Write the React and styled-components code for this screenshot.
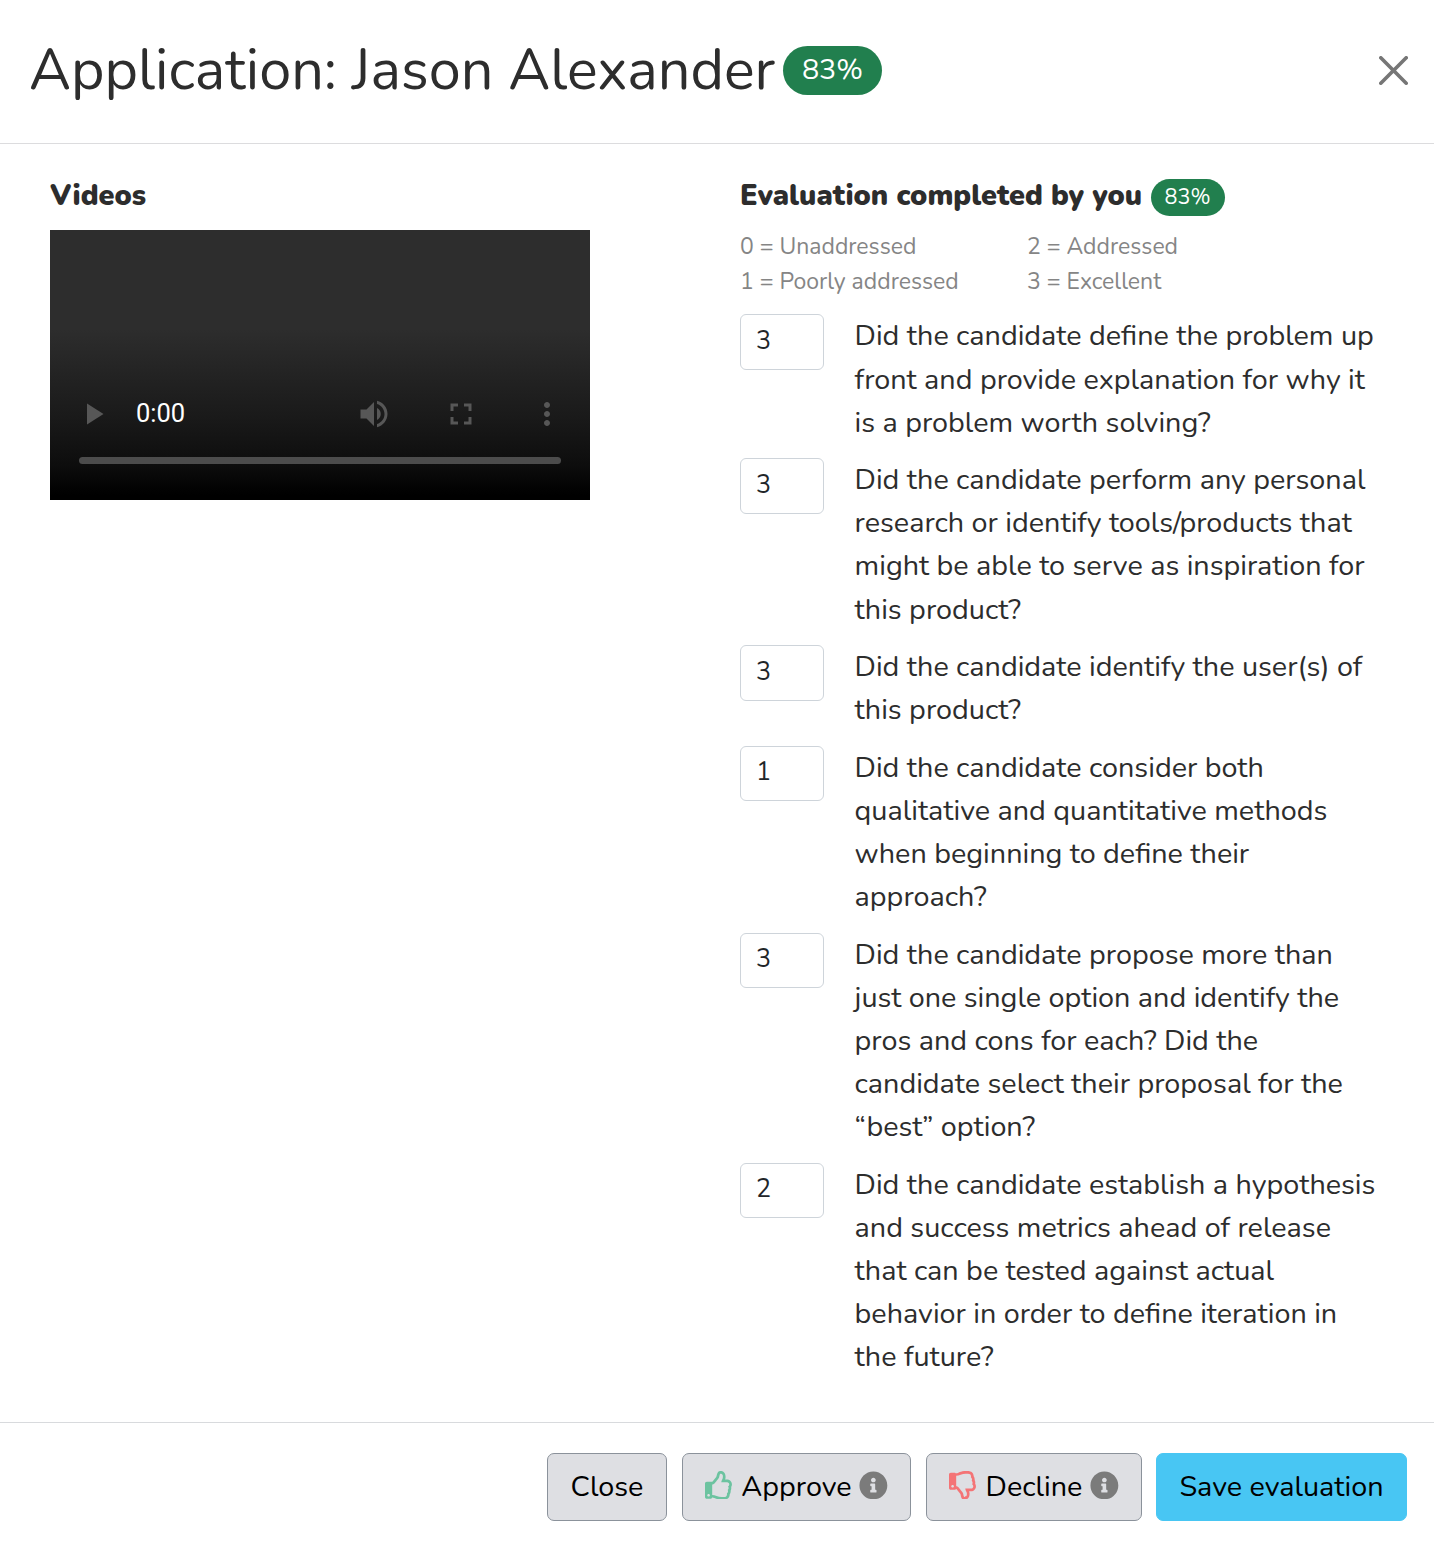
import React from "react";
import styled, { createGlobalStyle } from "styled-components";
import { FaRegThumbsUp, FaRegThumbsDown, FaInfoCircle } from "react-icons/fa";
import { MdPlayArrow, MdVolumeUp, MdFullscreen, MdMoreVert } from "react-icons/md";

const GlobalStyle = createGlobalStyle`
  *, *::before, *::after { box-sizing: border-box; }
  body {
    margin: 0;
    background: #fff;
    color: #2d2d2d;
    font-family: Nunito, Lato, "Open Sans", sans-serif;
    font-size: 28.77px;
    line-height: 43.125px;
  }
`;

const Modal = styled.div`
  display: flex;
  flex-direction: column;
  width: 1434px;
  height: 1548px;
  background: #fff;
`;

const Header = styled.header`
  display: flex;
  align-items: center;
  justify-content: space-between;
  height: 144px;
  padding: 0 26px 2px 29px;
  border-bottom: 1px solid #dcdcde;
`;

const TitleGroup = styled.div`
  display: flex;
  align-items: center;
`;

const Title = styled.h1`
  width: 754px;
  margin: -2px 0 0;
  font-size: 57.55px;
  font-weight: 400;
  line-height: 76px;
  white-space: nowrap;
`;

const Badge = styled.span`
  display: flex;
  align-items: center;
  justify-content: center;
  width: ${(p) => (p.$large ? 99 : 74)}px;
  height: ${(p) => (p.$large ? 49 : 37)}px;
  padding: ${(p) => (p.$large ? "0 0 1px" : "1px 1px 0 0")};
  border-radius: 25px;
  background: #217f4e;
  color: #fff;
  font-size: ${(p) => (p.$large ? 28.75 : 21.56)}px;
  line-height: 1;
`;

const CloseButton = styled.button`
  display: flex;
  padding: 0;
  border: 0;
  background: none;
  color: #767676;
`;

const Body = styled.main`
  display: grid;
  grid-template-columns: 540px 640px;
  column-gap: 150px;
  align-items: start;
  height: 1278px;
  padding: 28px 50px 0;
`;

const Section = styled.section`
  display: flex;
  flex-direction: column;
`;

const SectionHead = styled.div`
  display: flex;
  align-items: center;
  gap: 9px;
  height: 50px;
`;

const SectionTitle = styled.h2`
  margin: -3px 0 0;
  font-size: 28.75px;
  font-weight: 900;
  white-space: nowrap;
`;

const Player = styled.div`
  display: flex;
  flex-direction: column;
  justify-content: flex-end;
  width: 540px;
  height: 270px;
  margin-top: 8px;
  padding: 0 29px 36px;
  background: linear-gradient(#2d2d2d 0, #2d2d2d 100px, #1a1a1a 186px, #0d0d0d 235px, #000 265px);
`;

const Controls = styled.div`
  display: grid;
  grid-template-columns: 61px 1fr 87px 87px 86px;
  align-items: center;
  height: 36px;
  margin: 0 -29px 25px -4px;
  color: #575757;
`;

const ControlIcon = styled.span`
  display: flex;
  justify-content: ${(p) => (p.$start ? "flex-start" : "center")};
`;

const Time = styled.span`
  padding-bottom: 2px;
  color: #fff;
  font-family: Roboto, sans-serif;
  font-size: 25.5px;
  line-height: 34px;
`;

const Track = styled.div`
  height: 7px;
  border-radius: 4px;
  background: #4c4c4c;
`;

const Legend = styled.div`
  display: grid;
  grid-template-columns: 287px 1fr;
  margin: 7px 0 15.4px;
  color: #858585;
  font-size: 23px;
  line-height: 35px;
`;

const Questions = styled.div`
  display: flex;
  flex-direction: column;
  gap: 14.375px;
`;

const Question = styled.label`
  display: grid;
  grid-template-columns: 84px 1fr;
  column-gap: 30.6px;
  align-items: start;
`;

const Score = styled.input`
  width: 84px;
  height: 55.5px;
  padding: 0 15px 2px;
  border: 1px solid #ced4da;
  border-radius: 6px;
  background: #fff;
  color: #212529;
  font-family: inherit;
  font-size: 25.16px;
`;

const Prompt = styled.span`
  display: block;
`;

const Footer = styled.footer`
  display: flex;
  justify-content: flex-end;
  gap: 15px;
  height: 126px;
  padding: 30px 27px 0 0;
  border-top: 1px solid #d8dadd;
`;

const Button = styled.button`
  display: flex;
  align-items: center;
  justify-content: center;
  gap: 7.6px;
  width: ${(p) => p.$width}px;
  height: 68px;
  margin-left: ${(p) => (p.$primary ? -1 : 0)}px;
  padding: 0 0 2px;
  border: 1px solid ${(p) => (p.$primary ? "#48c6f3" : "#8b929b")};
  border-radius: 7px;
  background: ${(p) => (p.$primary ? "#48c6f3" : "#dedfe3")};
  color: #000;
  font-family: inherit;
  font-size: 28.77px;
  white-space: nowrap;
`;

const Glyph = styled.span`
  display: flex;
  margin-top: -2px;
  color: ${(p) => p.$color};
`;

const questions = [
  [3, "Did the candidate define the problem up front and provide explanation for why it is a problem worth solving?"],
  [3, "Did the candidate perform any personal research or identify tools/products that might be able to serve as inspiration for this product?"],
  [3, "Did the candidate identify the user(s) of this product?"],
  [1, "Did the candidate consider both qualitative and quantitative methods when beginning to define their approach?"],
  [3, "Did the candidate propose more than just one single option and identify the pros and cons for each? Did the candidate select their proposal for the “best” option?"],
  [2, "Did the candidate establish a hypothesis and success metrics ahead of release that can be tested against actual behavior in order to define iteration in the future?"],
];

const CloseIcon = () => (
  <svg width="29" height="29" viewBox="0 0 16 16" fill="currentColor">
    <path d="M.293.293a1 1 0 011.414 0L8 6.586 14.293.293a1 1 0 111.414 1.414L9.414 8l6.293 6.293a1 1 0 01-1.414 1.414L8 9.414l-6.293 6.293a1 1 0 01-1.414-1.414L6.586 8 .293 1.707a1 1 0 010-1.414z" />
  </svg>
);

export default function App() {
  return (
    <>
      <GlobalStyle />
      <Modal>
        <Header>
          <TitleGroup>
            <Title>Application: Jason Alexander</Title>
            <Badge $large>83%</Badge>
          </TitleGroup>
          <CloseButton aria-label="Close"><CloseIcon /></CloseButton>
        </Header>

        <Body>
          <Section>
            <SectionHead><SectionTitle>Videos</SectionTitle></SectionHead>
            <Player>
              <Controls>
                <ControlIcon $start><MdPlayArrow size={36} /></ControlIcon>
                <Time>0:00</Time>
                <ControlIcon><MdVolumeUp size={36} /></ControlIcon>
                <ControlIcon><MdFullscreen size={36} /></ControlIcon>
                <ControlIcon><MdMoreVert size={36} /></ControlIcon>
              </Controls>
              <Track />
            </Player>
          </Section>

          <Section>
            <SectionHead>
              <SectionTitle>Evaluation completed by you</SectionTitle>
              <Badge>83%</Badge>
            </SectionHead>
            <Legend>
              <span>0 = Unaddressed</span>
              <span>2 = Addressed</span>
              <span>1 = Poorly addressed</span>
              <span>3 = Excellent</span>
            </Legend>
            <Questions>
              {questions.map(([score, prompt]) => (
                <Question key={prompt}>
                  <Score defaultValue={score} />
                  <Prompt>{prompt}</Prompt>
                </Question>
              ))}
            </Questions>
          </Section>
        </Body>

        <Footer>
          <Button $width={120}>Close</Button>
          <Button $width={229}>
            <Glyph $color="#6cc3a0"><FaRegThumbsUp size={28.75} /></Glyph>
            Approve
            <Glyph $color="#7b7b7b"><FaInfoCircle size={28.75} /></Glyph>
          </Button>
          <Button $width={216}>
            <Glyph $color="#f47476"><FaRegThumbsDown size={28.75} /></Glyph>
            Decline
            <Glyph $color="#7b7b7b"><FaInfoCircle size={28.75} /></Glyph>
          </Button>
          <Button $primary $width={251}>Save evaluation</Button>
        </Footer>
      </Modal>
    </>
  );
}
